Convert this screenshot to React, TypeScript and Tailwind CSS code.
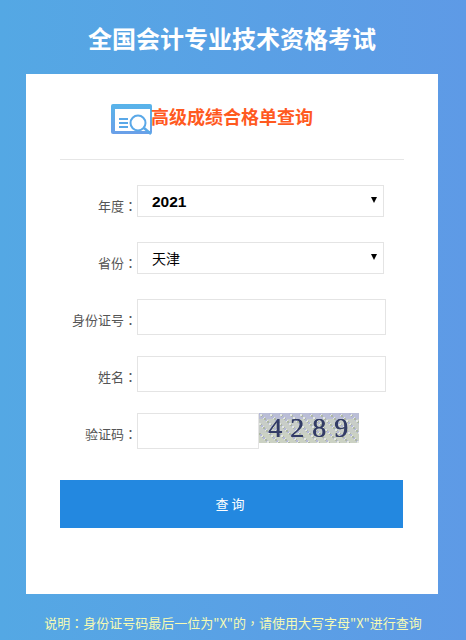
function Label({ children, down }: { children: string; down?: boolean }) {
  return (
    <label className={down ? "w-[77px] shrink-0 pt-[6px] text-right text-[13px] leading-[18px] text-[#555] whitespace-nowrap" : "w-[77px] shrink-0 pb-[2px] text-right text-[13px] leading-[18px] text-[#555] whitespace-nowrap"}>
      {children}
      <span className="font-['Noto_Sans_CJK_TC',sans-serif]">：</span>
    </label>
  );
}

function Caret() {
  return (
    <span className="absolute right-[7px] top-[12px] w-0 h-0 border-x-[3px] border-t-[6px] border-x-transparent border-t-black" />
  );
}

function Captcha() {
  // noise dots for the code picture
  const dots = [];
  for (let i = 0; i < 300; i++) {
    const x = (i * 37) % 100;
    const y = (i * 17) % 30;
    dots.push(<rect key={i} x={x} y={y} width="2" height="2" fill={i % 3 === 0 ? "#b4b8d8" : i % 3 === 1 ? "#aeb8a4" : "#e4e8e2"} />);
  }
  return (
    <div className="relative w-[100px] h-[30px] bg-[#c8cdc8] overflow-hidden">
      <svg width="100" height="30" className="absolute inset-0 blur-[0.7px]">
        <rect x="0" y="0" width="100" height="6" fill="#b4b8dc" opacity="0.7" />
        <rect x="0" y="20" width="100" height="10" fill="#cdd4c0" opacity="0.6" />
        {dots}
      </svg>
      <span className="absolute left-[9px] top-[-1px] font-['Liberation_Serif',serif] text-[28px] leading-[32px] tracking-[8px] text-[#333c66] whitespace-nowrap blur-[0.4px] [text-shadow:0.6px_0_0_#333c66]">
        4289
      </span>
    </div>
  );
}

export default function App() {
  return (
    <div className="w-[466px] h-[640px] overflow-hidden bg-gradient-to-r from-[#54a8e4] to-[#5e9ae6] font-['Noto_Sans_CJK_SC','Liberation_Sans',sans-serif]">
      <h1 className="h-[74px] flex items-center justify-center pt-[2px] text-[24px] font-bold text-white">
        <span className="mr-[2px]">全国会计专业技术资格考试</span>
      </h1>

      <div className="mx-[26px] w-[412px] h-[520px] bg-white px-[34px] pt-[30px]">
        {/* Logo and title */}
        <div className="flex items-start h-[31px] pl-[51px]">
          <svg width="42" height="31" viewBox="0 0 42 31" className="shrink-0">
            <defs>
              <linearGradient id="lg" x1="0" y1="0" x2="0" y2="1">
                <stop offset="0" stopColor="#58b4ea" />
                <stop offset="1" stopColor="#6a9fe8" />
              </linearGradient>
            </defs>
            <rect x="0" y="0" width="41" height="30" rx="2" fill="url(#lg)" />
            <rect x="4" y="5" width="35" height="22" fill="#fff" />
            <path d="M8 15h9M8 19h9M8 23h9" stroke="#5aa8e8" strokeWidth="2" />
            <circle cx="27" cy="19" r="7.5" fill="#fff" stroke="#5aa8e8" strokeWidth="2" />
            <path d="M33 24l7 6" stroke="#5aa8e8" strokeWidth="2.5" />
          </svg>
          <span className="ml-[-2px] text-[18px] leading-[24px] font-bold text-[#ff5a1f] whitespace-nowrap">
            高级成绩合格单查询
          </span>
        </div>

        <div className="mt-[24px] h-px bg-[#e6e6e6]" />

        <div className="mt-[25px] flex flex-col">
          <div className="flex items-end h-[32px]">
            <Label>年度</Label>
            <div className="relative w-[247px] h-[32px]">
              <select className="appearance-none w-full h-full border border-[#e4e4e4] bg-white pl-[14px] pt-[1px] text-[15.5px] leading-[20px] font-bold text-black font-['Liberation_Sans',sans-serif]" defaultValue="2021">
                <option>2021</option>
              </select>
              <Caret />
            </div>
          </div>
          <div className="flex items-end h-[32px] mt-[25px]">
            <Label>省份</Label>
            <div className="relative w-[247px] h-[32px]">
              <select className="appearance-none w-full h-full border border-[#e4e4e4] bg-white pl-[14px] text-[14px] text-black" defaultValue="天津">
                <option>天津</option>
              </select>
              <Caret />
            </div>
          </div>
          <div className="flex items-center h-[36px] mt-[25px]">
            <Label down>身份证号</Label>
            <input className="w-[249px] h-[36px] border border-[#e4e4e4] bg-white" />
          </div>
          <div className="flex items-center h-[36px] mt-[21px]">
            <Label down>姓名</Label>
            <input className="w-[249px] h-[36px] border border-[#e4e4e4] bg-white" />
          </div>
          <div className="flex items-start h-[36px] mt-[21px]">
            <div className="h-[36px] flex items-center"><Label down>验证码</Label></div>
            <input className="w-[122px] h-[36px] border border-[#e4e4e4] bg-white" />
            <Captcha />
          </div>
        </div>

        <button className="mt-[31px] w-[343px] h-[48px] bg-[#2388e0] text-[13px] tracking-[3px] text-white">
          查询
        </button>
      </div>

      <p className="mt-[20px] text-center text-[13px] leading-[18px] text-[#f6fbb4] whitespace-nowrap">
        说明<span className="font-['Noto_Sans_CJK_TC',sans-serif]">：</span>身份证号码最后一位为"X"的<span className="font-['Noto_Sans_CJK_TC',sans-serif]">，</span>请使用大写字母"X"进行查询
      </p>
    </div>
  );
}
